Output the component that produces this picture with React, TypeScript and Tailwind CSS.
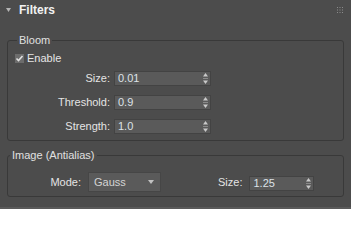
import React from 'react';

const font = { fontFamily: '"Liberation Sans", Arial, sans-serif' };

function Spinner() {
  return (
    <svg width="5" height="11" viewBox="0 0 5 11" className="shrink-0">
      <polygon points="2.5,0 5,3.5 0,3.5" fill="#c9c9c9" />
      <rect x="0" y="5" width="5" height="1" fill="#8a8a8a" />
      <polygon points="0,7.5 5,7.5 2.5,11" fill="#c9c9c9" />
    </svg>
  );
}

function SpinField({ value, width }: { value: string; width: string }) {
  return (
    <div
      className={`${width} h-[15px] flex items-center justify-between bg-[#5a5a5a] border border-[#434343] pl-[3px] pr-[2px]`}
    >
      <span className="text-[11px] leading-none text-[#dde2e8]">{value}</span>
      <Spinner />
    </div>
  );
}

function SpinRow({ label, value }: { label: string; value: string }) {
  return (
    <div className="flex items-center">
      <span className="w-[95px] text-right text-[11px] leading-none text-[#e4e4e4]">{label}</span>
      <div className="ml-[4px]">
        <SpinField value={value} width="w-[97px]" />
      </div>
    </div>
  );
}

function Group({ title, children, className }: { title: string; children: React.ReactNode; className?: string }) {
  return (
    <fieldset className={`mx-[7px] border border-[#393939] rounded-[3px] ${className ?? ''}`}>
      <legend className="ml-[2px] px-[2px] text-[11px] leading-[13px] text-[#e0e0e0]">{title}</legend>
      {children}
    </fieldset>
  );
}

export default function App() {
  const stats = [
    { label: 'Size:', value: '0.01' },
    { label: 'Threshold:', value: '0.9' },
    { label: 'Strength:', value: '1.0' },
  ];

  return (
    <div className="w-[351px] h-[209px] bg-[#5a5a5a]" style={font}>
      <div className="h-[207px] bg-[#4c4c4c] flex flex-col">
        {/* header */}
        <div className="h-[20px] flex items-center pl-[6px] pr-[8px]">
          <svg width="5" height="4" viewBox="0 0 5 4">
            <polygon points="0,0 5,0 2.5,4" fill="#b5b5b5" />
          </svg>
          <span className="ml-[8px] text-[12px] font-bold leading-none text-[#f2f2f2]">Filters</span>
          <svg width="6" height="6" viewBox="0 0 6 6" className="ml-auto">
            {[0, 2.5, 5].map((y) =>
              [0, 2.5, 5].map((x) => <rect key={`${x}-${y}`} x={x} y={y} width="1" height="1" fill="#8c8c8c" />)
            )}
          </svg>
        </div>

        <Group title="Bloom" className="mt-[14px] pl-[7px] pb-[6px]">
          <div className="mt-[5px] flex items-center h-[13px]">
            <svg width="9" height="9" viewBox="0 0 9 9">
              <rect x="0" y="0" width="9" height="9" fill="#6c6c6c" />
              <path d="M1.5 4.5 L3.5 6.5 L7.5 2" stroke="#e2e2e2" strokeWidth="1.6" fill="none" />
            </svg>
            <span className="ml-[3px] text-[11px] leading-none text-[#e6e6e6]">Enable</span>
          </div>
          <div className="mt-[6px] flex flex-col gap-[9px]">
            {stats.map((s) => (
              <SpinRow key={s.label} label={s.label} value={s.value} />
            ))}
          </div>
        </Group>

        <Group title="Image (Antialias)" className="mt-[8px] pb-[4px]">
          <div className="mt-[10px] flex items-center">
            <span className="w-[73px] text-right text-[11px] leading-none text-[#e4e4e4]">Mode:</span>
            <div className="ml-[7px] w-[73px] h-[20px] flex items-center justify-between bg-[#5a5a5a] border border-[#464646] pl-[5px] pr-[6px]">
              <span className="text-[11px] leading-none text-[#d4d4d4]">Gauss</span>
              <svg width="6" height="4" viewBox="0 0 6 4">
                <polygon points="0,0 6,0 3,4" fill="#c2c2c2" />
              </svg>
            </div>
            <span className="ml-[57px] text-[11px] leading-none text-[#e4e4e4]">Size:</span>
            <div className="ml-[7px] mt-[2px]">
              <SpinField value="1.25" width="w-[65px]" />
            </div>
          </div>
        </Group>
      </div>
    </div>
  );
}
